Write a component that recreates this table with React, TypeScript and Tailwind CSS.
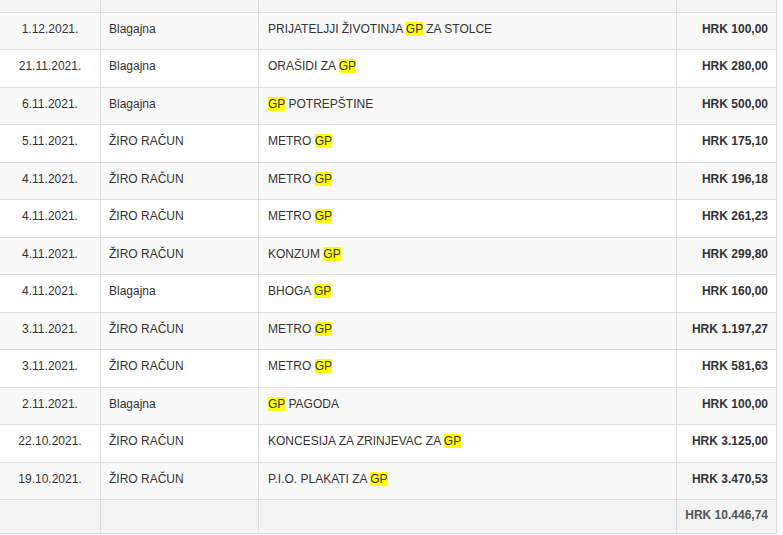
import React from "react";

type Row = { date: string; acc: string; desc: React.ReactNode; amt: string };

const GP = () => <span className="bg-[#ffff00]">GP</span>;

const rows: Row[] = [
  { date: "1.12.2021.", acc: "Blagajna", desc: <>PRIJATELJJI ŽIVOTINJA <GP /> ZA STOLCE</>, amt: "HRK 100,00" },
  { date: "21.11.2021.", acc: "Blagajna", desc: <>ORAŠIDI ZA <GP /></>, amt: "HRK 280,00" },
  { date: "6.11.2021.", acc: "Blagajna", desc: <><GP /> POTREPŠTINE</>, amt: "HRK 500,00" },
  { date: "5.11.2021.", acc: "ŽIRO RAČUN", desc: <>METRO <GP /></>, amt: "HRK 175,10" },
  { date: "4.11.2021.", acc: "ŽIRO RAČUN", desc: <>METRO <GP /></>, amt: "HRK 196,18" },
  { date: "4.11.2021.", acc: "ŽIRO RAČUN", desc: <>METRO <GP /></>, amt: "HRK 261,23" },
  { date: "4.11.2021.", acc: "ŽIRO RAČUN", desc: <>KONZUM <GP /></>, amt: "HRK 299,80" },
  { date: "4.11.2021.", acc: "Blagajna", desc: <>BHOGA <GP /></>, amt: "HRK 160,00" },
  { date: "3.11.2021.", acc: "ŽIRO RAČUN", desc: <>METRO <GP /></>, amt: "HRK 1.197,27" },
  { date: "3.11.2021.", acc: "ŽIRO RAČUN", desc: <>METRO <GP /></>, amt: "HRK 581,63" },
  { date: "2.11.2021.", acc: "Blagajna", desc: <><GP /> PAGODA</>, amt: "HRK 100,00" },
  { date: "22.10.2021.", acc: "ŽIRO RAČUN", desc: <>KONCESIJA ZA ZRINJEVAC ZA <GP /></>, amt: "HRK 3.125,00" },
  { date: "19.10.2021.", acc: "ŽIRO RAČUN", desc: <>P.I.O. PLAKATI ZA <GP /></>, amt: "HRK 3.470,53" },
];

export default function App() {
  return (
    <div className="w-[783px] h-[535px] bg-white overflow-hidden text-[12px] text-[#333] font-['Liberation_Sans',Arial,sans-serif]">
      <div className="w-[777px]">
        <div className="grid grid-cols-[101px_158px_418px_100px] h-[13px] bg-[#f5f5f5] border-b border-[#dddddd]">
          <div className="border-r border-[#dddddd]" />
          <div className="border-r border-[#dddddd]" />
          <div className="border-r border-[#dddddd]" />
          <div className="border-r border-[#dddddd]" />
        </div>
        {rows.map((r, i) => (
          <div
            key={i}
            className={
              "grid grid-cols-[101px_158px_418px_100px] border-b border-[#dddddd] " +
              (i % 2 === 0 ? "h-[37px] bg-[#f9f9f9]" : "h-[38px] bg-white")
            }
          >
            <div className="border-r border-[#dddddd] flex items-center justify-center pb-[5px]">{r.date}</div>
            <div className="border-r border-[#dddddd] flex items-center pl-[8px] pb-[5px]">{r.acc}</div>
            <div className="border-r border-[#dddddd] flex items-center pl-[9px] pb-[5px]">
              <span>{r.desc}</span>
            </div>
            <div className="border-r border-[#dddddd] flex items-center justify-end pr-[8px] pb-[5px] font-bold">{r.amt}</div>
          </div>
        ))}
        <div className="grid grid-cols-[101px_158px_418px_100px] h-[34px] bg-[#f3f3f3] border-b border-[#dddddd]">
          <div className="border-r border-[#dddddd]" />
          <div className="border-r border-[#dddddd]" />
          <div className="border-r border-[#dddddd]" />
          <div className="border-r border-[#dddddd] flex items-center justify-end pr-[8px] pb-[3px] font-bold text-[#555]">HRK 10.446,74</div>
        </div>
      </div>
    </div>
  );
}
